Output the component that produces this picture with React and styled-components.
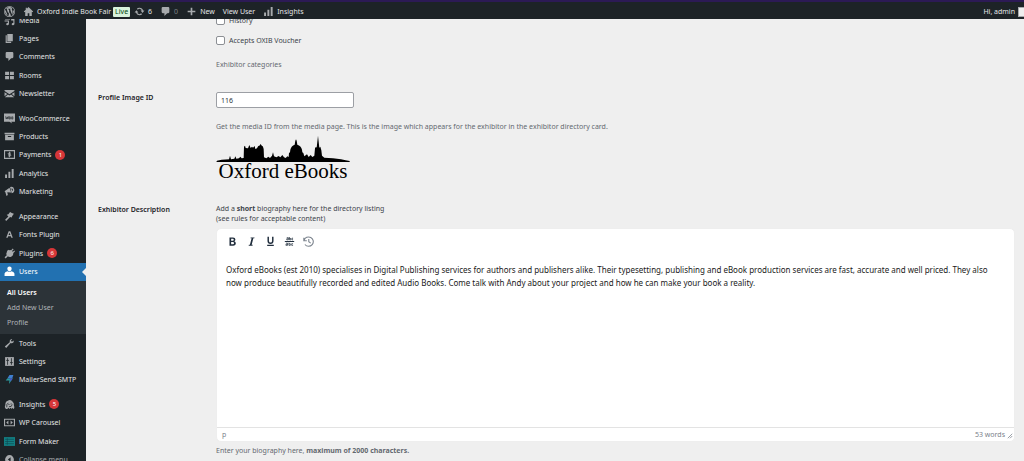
import React, { useState } from "react";
import styled, { createGlobalStyle, css } from "styled-components";

/* * * * * * * * * * * Styled Components CSS  * * * * * * * * * * */
const GlobalStyle = createGlobalStyle`
  * {
    box-sizing: border-box;
  }
  body {
    margin: 0;
    background: #efefef;
    color: #3c434a;
    font-family: "Noto Sans", sans-serif;
    font-size: 7px;
  }
  button, input, textarea {
    font-family: inherit;
  }
  a {
    color: inherit;
    text-decoration: none;
  }
`;

const Page = styled.div`
  display: flex;
  flex-direction: column;
  height: 100vh;
  overflow: hidden;
`;

const AdminBar = styled.header`
  flex: none;
  display: flex;
  align-items: center;
  height: 19px;
  padding: 2px 0 0 4px;
  border-top: 2px solid #2c1a55;
  background: #1d2327;
  color: #e4e5e6;
  font-size: 7px;
  z-index: 1;
`;

const BarLink = styled.a`
  display: flex;
  align-items: center;
  gap: 3px;
  margin-right: ${({ $space = 8 }) => $space}px;
  white-space: nowrap;
  color: ${({ $dim }) => ($dim ? "#7d8286" : "inherit")};
  svg {
    color: #a7aaad;
  }
`;

const Live = styled.span`
  padding: 0 2px;
  border-radius: 1px;
  background: #d9f2dc;
  color: #00450c;
  line-height: 10px;
`;

const Account = styled(BarLink)`
  margin: 0 0 0 auto;
`;

const Avatar = styled.span`
  width: 6px;
  height: 10px;
  border: 1px solid #a7aaad;
  border-right: 0;
  background: #eee;
`;

const Icon = styled.svg`
  flex: none;
  width: ${({ $size }) => $size || 11}px;
  height: ${({ $size }) => $size || 11}px;
  fill: currentColor;
  stroke: none;
`;

const Body = styled.div`
  flex: 1;
  display: flex;
  min-height: 0;
`;

const Menu = styled.nav`
  flex: none;
  width: 86px;
  overflow: hidden;
  background: #1d2327;
  color: #e4e5e6;
`;

/* the menu is scrolled a little under the admin bar */
const MenuScroll = styled.div`
  margin-top: -8px;
`;

const MenuGroup = styled.div`
  display: grid;
  grid-auto-rows: 1fr;
  height: ${({ $height }) => $height}px;
  margin-bottom: ${({ $last }) => ($last ? 0 : 6)}px;
`;

const MenuItem = styled.a`
  position: relative;
  display: flex;
  align-items: center;
  padding-left: 4px;
  white-space: nowrap;
  color: ${({ $dim }) => ($dim ? "#a7aaad" : "inherit")};
  svg {
    margin-right: 4px;
    color: #a7aaad;
  }
  ${({ $active }) =>
    $active &&
    css`
      background: #2271b1;
      color: #fff;
      svg {
        color: #fff;
      }
      &::after {
        content: "";
        position: absolute;
        right: 0;
        top: 5px;
        border: 4px solid transparent;
        border-right-color: #efefef;
        border-left: 0;
      }
    `}
`;

const Badge = styled.span`
  min-width: 10px;
  margin-left: 4px;
  border-radius: 5px;
  background: #d63638;
  color: #fff;
  font-size: 6px;
  line-height: 10px;
  text-align: center;
`;

const SubMenu = styled.div`
  display: flex;
  flex-direction: column;
  height: 53px;
  padding: 4px 0 4px 7px;
  background: #2c3338;
`;

const SubLink = styled.a`
  line-height: 15px;
  color: ${({ $current }) => ($current ? "#fff" : "#b0b4b8")};
  font-weight: ${({ $current }) => ($current ? 600 : 400)};
`;

const Content = styled.main`
  flex: 1;
  min-width: 0;
  padding: 0 9px 0 12px;
  overflow: hidden;
`;

const FormRow = styled.div`
  display: grid;
  grid-template-columns: 118px 1fr;
`;

const RowLabel = styled.label`
  color: #1d2327;
  font-weight: 600;
  line-height: 12px;
`;

const CheckLabel = styled.label`
  display: flex;
  align-items: center;
  gap: 4px;
  height: 20px;
`;

const CheckBox = styled.input`
  appearance: none;
  width: 9px;
  height: 9px;
  margin: 0;
  border: 1px solid #8c8f94;
  border-radius: 2px;
  background: #fff;
`;

const Checks = styled.div`
  margin-top: -9px;
`;

const Hint = styled.p`
  margin: 0;
  color: #646970;
  line-height: 10px;
`;

const Categories = styled(Hint)`
  margin: 10px 0 22px;
`;

const IdInput = styled.input`
  display: block;
  width: 138px;
  height: 16px;
  margin-bottom: 14px;
  padding: 0 4px;
  border: 1px solid #9c9fa4;
  border-radius: 2px;
  background: #fff;
  color: #2c3338;
  font-size: 7px;
`;

const Logo = styled.figure`
  width: 134px;
  margin: 3px 0 23px;
  color: #000;
  svg {
    display: block;
    width: 134px;
    height: 27px;
  }
`;

const LogoName = styled.figcaption`
  font-family: "Liberation Serif", serif;
  font-size: 21px;
  line-height: 19px;
  text-align: center;
  white-space: nowrap;
`;

const Intro = styled.p`
  margin: 0 0 4px;
  line-height: 10px;
`;

const Editor = styled.section`
  display: flex;
  flex-direction: column;
  height: 214px;
  margin-bottom: 4px;
  border: 1px solid #eee;
  border-radius: 5px;
  background: #fff;
  overflow: hidden;
`;

const Toolbar = styled.div`
  display: flex;
  align-items: center;
  gap: 8px;
  height: 25px;
  padding-left: 10px;
  box-shadow: 0 1px 2px rgba(34, 47, 62, 0.15);
`;

const ToolButton = styled.button`
  display: flex;
  padding: 0;
  border: 0;
  background: none;
  color: ${({ $off }) => ($off ? "#7d858f" : "#222f3e")};
`;

const BioText = styled.textarea`
  flex: 1;
  padding: 9px 16px 8px 9px;
  border: 0;
  outline: 0;
  resize: none;
  color: #1a1a1a;
  font-size: 8px;
  line-height: 13px;
`;

const StatusBar = styled.div`
  display: flex;
  align-items: center;
  justify-content: space-between;
  height: 14px;
  padding: 0 1px 0 5px;
  border-top: 1px solid #e3e3e3;
  color: #7a828b;
`;

const Words = styled.span`
  display: flex;
  align-items: flex-end;
  gap: 2px;
`;

/* * * * * * * * * * * Icons  * * * * * * * * * * */
// all drawn on the 20px dashicons grid
const icons = {
  wordpress: (
    <>
      <path
        fillRule="evenodd"
        d="M10 0a10 10 0 1 0 0 20 10 10 0 0 0 0-20zm0 1.2a8.800 8.800 0 1 1 0 17.600 8.800 8.800 0 0 1 0-17.600z"
      />
      <path d="M2.600 6.700 6.700 17.300A8 8 0 0 1 2.600 6.700zM3.500 5.300A8 8 0 0 1 15.300 4c-1.600.4-1.400 2-.6 3.300.9 1.500 1 2.400.4 4.300l-1.100 3-3-8.700 1.100-.2V5H7.300v.7l1.100.2 1.200 3.300-1.700 5.100L5 5.900 6 5.700V5zM10.200 11l2.400 6.600a8 8 0 0 1-4.700.1zM17.200 6.500a8 8 0 0 1-3 10.300l2.300-6.800c.5-1.300.7-2.400.7-3.500z" />
    </>
  ),
  home: <path d="m10 2 8.500 8.200-1.300 1.300-1.200-1V18h-4.500v-5h-3v5H4v-7.500l-1.200 1-1.300-1.300L5 6.800V3h2v2z" />,
  update: (
    <path d="M10.200 3.300c3 0 5.500 2 6.300 4.700H19l-3.500 4.500L12 8h2.300a4.400 4.400 0 0 0-7.300-1.400L5.200 5.100a6.600 6.600 0 0 1 5-1.800zM9.800 16.700A6.600 6.600 0 0 1 3.500 12H1l3.500-4.500L8 12H5.700a4.400 4.400 0 0 0 7.300 1.400l1.800 1.500a6.600 6.600 0 0 1-5 1.800z" />
  ),
  comment: <path d="M5 2h10q2 0 2 2v7q0 2-2 2h-2l-5 5v-5H5q-2 0-2-2V4q0-2 2-2z" />,
  plus: <path d="M17 8.500v3h-5.500V17h-3v-5.500H3v-3h5.500V3h3v5.500z" />,
  chart: <path d="M2 18v-6h3.500v6zM8 18V7h3.500v11zM14 18V2h3.500v16z" />,
  media: <path d="M2 2h9v6H2zM13 7h6v9.500a2.500 2 0 1 1-2-2V10h-4zM1 10h8v6.500a2.500 2 0 1 1-2-2V12H1z" />,
  pages: <path d="M6 15V2h10v13zM5 4H3v14h10v-2H5z" />,
  grid: <path d="M2 3h7.200v6.200H2zM10.800 3H18v6.200h-7.200zM2 10.800h7.200V17H2zM10.800 10.800H18V17h-7.200z" />,
  mail: <path d="M1 3.500h18v2l-9 6-9-6zM1 7.500l5 3.500-5 4zM19 7.500 14 11l5 4zM7.200 12l2.800 1.700 2.800-1.700 5.700 4.800h-17z" />,
  woo: (
    <>
      <path d="M0 1h20v15h-7l2 3-5-3H0z" />
      <path d="m3 6 1 5 2-4 1 4 1.500-5M9.500 7h2v4h-2zM14 7h2v4h-2z" fill="none" stroke="#1d2327" strokeWidth="1.200" />
    </>
  ),
  archive: <path d="M1 3h18v3H1zM2 7h16v10H2zm5 2v2h6V9z" fillRule="evenodd" />,
  dollar: (
    <>
      <path fillRule="evenodd" d="M0 2h20v16H0zm2 2v12h16V4z" />
      <path d="M12.500 7.500H9q-1.500 0-1.500 1.200T9 10h2q1.500 0 1.500 1.200T11 12.500H7.500M10 5v10" fill="none" stroke="currentColor" strokeWidth="1.700" />
    </>
  ),
  horn: <path fillRule="evenodd" d="M1 9.500 10 3l3 9-7-.5 1 5-2.500 1.500-2-6.500zM11 2q6-2 7.500 4T14 13zm2.500 3 1.500 4q2-1 1-3t-2.500-1z" />,
  brush: <path d="M11 2q3 2 7 3l-3 4-1 3-3-1-7 7-2-2 6-6-3-3 3-1z" />,
  letter: <path fillRule="evenodd" d="M8.500 4h3L16 16h-2.700l-1-3H7.700l-1 3H4zM10 6.800 8.300 11h3.400z" />,
  plug: <path d="m13 4 3-3 1.500 1.500-3 3 1.500 1.500 3-2.500L20 6l-3 3q0 5-4 7-4 1-6-1l-4 4-2-2 4-4q-2-3 1-6.500Q8 3 13 4zM5 6l3-3 1 1-3 3z" />,
  user: <path d="M10 10q-4-1-4-5t4-4 4 4-4 5zm-3.500-.5q3.500 3 7 0 4.500.5 5.500 4V18H1v-4.500q1-3.500 5.500-4z" />,
  wrench: <path d="M17 8q-2 2-5 1l-8 9-2.500-2.500 9-8q-1-3 1.500-5 1.500-1 3-.5l-2.500 3 2 2 3-2.500q.7 2-.5 3.500z" />,
  sliders: (
    <>
      <path d="M2 2h16v16H2z" />
      <path d="M6.500 4v12M13.500 4v12M4 8h5M11 12h5" fill="none" stroke="#1d2327" strokeWidth="1.500" />
    </>
  ),
  bolt: (
    <>
      <path fill="#3f7fd0" d="M10 2h7l-2 6H6z" />
      <path fill="#2a9a9f" d="M6 8h10l-7 10 1-6H3z" />
      <path fill="#4a50c8" d="M10 8h6l-4 5z" />
    </>
  ),
  beast: (
    <>
      <path d="M4 18q-4-2-1.500-7Q2 4 7 3q4-3 8 1 4 3 3 8 2 5-1 6l-2-2-1 2-2-2-2 2-2-2-2 2z" />
      <path d="M5 15q-1-6 3-8M9 14q5 1 6-4M8 10h2M12 9h2" fill="none" stroke="#1d2327" strokeWidth="1.400" />
    </>
  ),
  carousel: (
    <>
      <path fillRule="evenodd" d="M0 3h20v14H0zm2 2v10h16V5z" />
      <path d="M8 6.500v7L4 10zM12 6.500v7l4-3.500z" />
    </>
  ),
  form: (
    <>
      <path fill="#127f83" d="M0 2h20v16H0z" />
      <path d="M2 6h16M2 10h16M2 14h16M6 4v12" stroke="#0c4a52" strokeWidth="1.200" />
    </>
  ),
  collapse: <path fillRule="evenodd" d="M10 2a8 8 0 1 0 0 16 8 8 0 0 0 0-16zm2 4v8l-5-4z" />,
  bold: <path fillRule="evenodd" d="M4.500 2.500H11q4.300 0 4.300 3.900 0 2.300-2 3.200 2.700.8 2.700 3.700 0 4.200-5 4.200H4.500zM7.500 5v3.600h3q1.800 0 1.800-1.800T10.500 5zm0 5.900V15h3.300q2 0 2-2t-2-2.100z" />,
  italic: <path d="M8.500 2.500H15.500l-.3 1.500h-1.800L10.300 16h1.900l-.4 1.500H4.800L5.200 16h1.900l3.100-12H8.100z" />,
  underline: <path d="M4.500 1.500h2.700V9q0 3 2.800 3t2.800-3V1.500h2.700V9q0 5.500-5.500 5.500T4.500 9zM4 16h12v2.200H4z" />,
  strike: (
    <>
      <path d="M1.500 9.300h17v1.500h-17z" />
      <path d="M5 3h3v4H5V5h3M10 2v5h2.500V4.500H10M16.500 4h-2v3h2M3.500 13h3v4h-3v-2h3M9 12v5h2.500v-3H9M16.500 14h-2.500v3h2.500" fill="none" stroke="currentColor" strokeWidth="1.300" />
    </>
  ),
  restore: (
    <path
      d="M1.500 3v5.500H7M2 8a8.500 8.500 0 1 1 1.500 7.500M10.500 5.500V10.500l3.500 2.500"
      fill="none"
      stroke="currentColor"
      strokeWidth="2"
    />
  ),
};

const Glyph = ({ name, size }) => (
  <Icon viewBox="0 0 20 20" $size={size} aria-hidden="true">
    {icons[name]}
  </Icon>
);

const groups = [
  {
    height: 92,
    items: [
      ["media", "Media"],
      ["pages", "Pages"],
      ["comment", "Comments"],
      ["grid", "Rooms"],
      ["mail", "Newsletter"],
    ],
  },
  {
    height: 92,
    items: [
      ["woo", "WooCommerce"],
      ["archive", "Products"],
      ["dollar", "Payments", 1],
      ["chart", "Analytics"],
      ["horn", "Marketing"],
    ],
  },
  {
    height: 74,
    sub: ["All Users", "Add New User", "Profile"],
    items: [
      ["brush", "Appearance"],
      ["letter", "Fonts Plugin"],
      ["plug", "Plugins", 6],
      ["user", "Users"],
    ],
  },
  {
    height: 55,
    items: [
      ["wrench", "Tools"],
      ["sliders", "Settings"],
      ["bolt", "MailerSend SMTP"],
    ],
  },
  {
    height: 74,
    items: [
      ["beast", "Insights", 5],
      ["carousel", "WP Carousel"],
      ["form", "Form Maker"],
      ["collapse", "Collapse menu"],
    ],
  },
];

const tools = ["bold", "italic", "underline", "strike", "restore"];

const BIO =
  "Oxford eBooks (est 2010) specialises in Digital Publishing services for authors and publishers alike. Their typesetting, publishing and eBook production services are fast, accurate and well priced. They also now produce beautifully recorded and edited Audio Books. Come talk with Andy about your project and how he can make your book a reality.";

function SideMenu() {
  return (
    <Menu>
      <MenuScroll>
        {groups.map(({ height, items, sub }) => (
          <React.Fragment key={items[0][1]}>
            <MenuGroup $height={height} $last={Boolean(sub)}>
              {items.map(([icon, label, count]) => (
                <MenuItem
                  key={label}
                  href="#"
                  $active={label === "Users"}
                  $dim={label === "Collapse menu"}
                >
                  <Glyph name={icon} />
                  {label}
                  {count && <Badge>{count}</Badge>}
                </MenuItem>
              ))}
            </MenuGroup>
            {sub && (
              <SubMenu>
                {sub.map((label, i) => (
                  <SubLink key={label} href="#" $current={i === 0}>
                    {label}
                  </SubLink>
                ))}
              </SubMenu>
            )}
          </React.Fragment>
        ))}
      </MenuScroll>
    </Menu>
  );
}

function App() {
  const [bio, setBio] = useState(BIO);
  const [imageId, setImageId] = useState("116");

  return (
    <Page>
      <GlobalStyle />
      <AdminBar>
        <BarLink href="#" aria-label="WordPress">
          <Glyph name="wordpress" />
        </BarLink>
        <BarLink href="#" $space={2}>
          <Glyph name="home" />
          Oxford Indie Book Fair
        </BarLink>
        <BarLink href="#" $space={4}>
          <Live>Live</Live>
        </BarLink>
        <BarLink href="#">
          <Glyph name="update" />6
        </BarLink>
        <BarLink href="#" $dim>
          <Glyph name="comment" />0
        </BarLink>
        <BarLink href="#">
          <Glyph name="plus" />
          New
        </BarLink>
        <BarLink href="#">View User</BarLink>
        <BarLink href="#">
          <Glyph name="chart" />
          Insights
        </BarLink>
        <Account href="#">
          Hi, admin
          <Avatar />
        </Account>
      </AdminBar>
      <Body>
        <SideMenu />
        <Content>
          <FormRow>
            <span />
            <Checks>
              <CheckLabel>
                <CheckBox type="checkbox" />
                History
              </CheckLabel>
              <CheckLabel>
                <CheckBox type="checkbox" />
                Accepts OXIB Voucher
              </CheckLabel>
              <Categories>Exhibitor categories</Categories>
            </Checks>
          </FormRow>
          <FormRow>
            <RowLabel htmlFor="image_id">Profile Image ID</RowLabel>
            <div>
              <IdInput id="image_id" value={imageId} onChange={(e) => setImageId(e.target.value)} />
              <Hint>
                Get the media ID from the media page. This is the image which appears for the exhibitor in the
                exhibitor directory card.
              </Hint>
              <Logo>
                <svg viewBox="49 28 402 81" aria-hidden="true">
                  <path d="M50 109 52 105 66 102 88 101 91 90 94 101 104 99 107 92 110 99 118 98 122 93 126 98 132 97 133 63 136 60 138 67 145 68 149 58 153 67 157 63 160 66 165 61 167 70 172 68Q174 60 181 59L183 54 185 59Q191 61 192 70L193 95 200 98 206 93 211 97 217 90 220 80 223 92 230 95 237 91 242 95 248 88 253 95 258 97 263 92 267 94 268 82 271 80 272 72Q275 60 285 57L287 45 289 41 291 45 293 57Q304 60 307 72L308 80 311 82 314 92 322 86 327 94 333 88 338 94 344 90 346 68 349 63 351 66 355 30 359 66 362 63 365 74 367 90 374 96 400 98 424 101 438 104 450 106 450 109z" />
                </svg>
                <LogoName>Oxford eBooks</LogoName>
              </Logo>
            </div>
          </FormRow>
          <FormRow>
            <RowLabel htmlFor="bio">Exhibitor Description</RowLabel>
            <div>
              <Intro>
                Add a <b>short</b> biography here for the directory listing
                <br />
                (see rules for acceptable content)
              </Intro>
              <Editor>
                <Toolbar>
                  {tools.map((name) => (
                    <ToolButton key={name} type="button" aria-label={name} $off={name === "restore"}>
                      <Glyph name={name} />
                    </ToolButton>
                  ))}
                </Toolbar>
                <BioText id="bio" spellCheck="false" value={bio} onChange={(e) => setBio(e.target.value)} />
                <StatusBar>
                  p
                  <Words>
                    {bio.split(" ").length} words
                    <Icon viewBox="0 0 8 8" $size={6} aria-hidden="true">
                      <path d="M1 7 7 1M4 7l3-3" stroke="currentColor" />
                    </Icon>
                  </Words>
                </StatusBar>
              </Editor>
              <Hint>
                Enter your biography here, <b>maximum of 2000 characters.</b>
              </Hint>
            </div>
          </FormRow>
        </Content>
      </Body>
    </Page>
  );
}

export default App;
